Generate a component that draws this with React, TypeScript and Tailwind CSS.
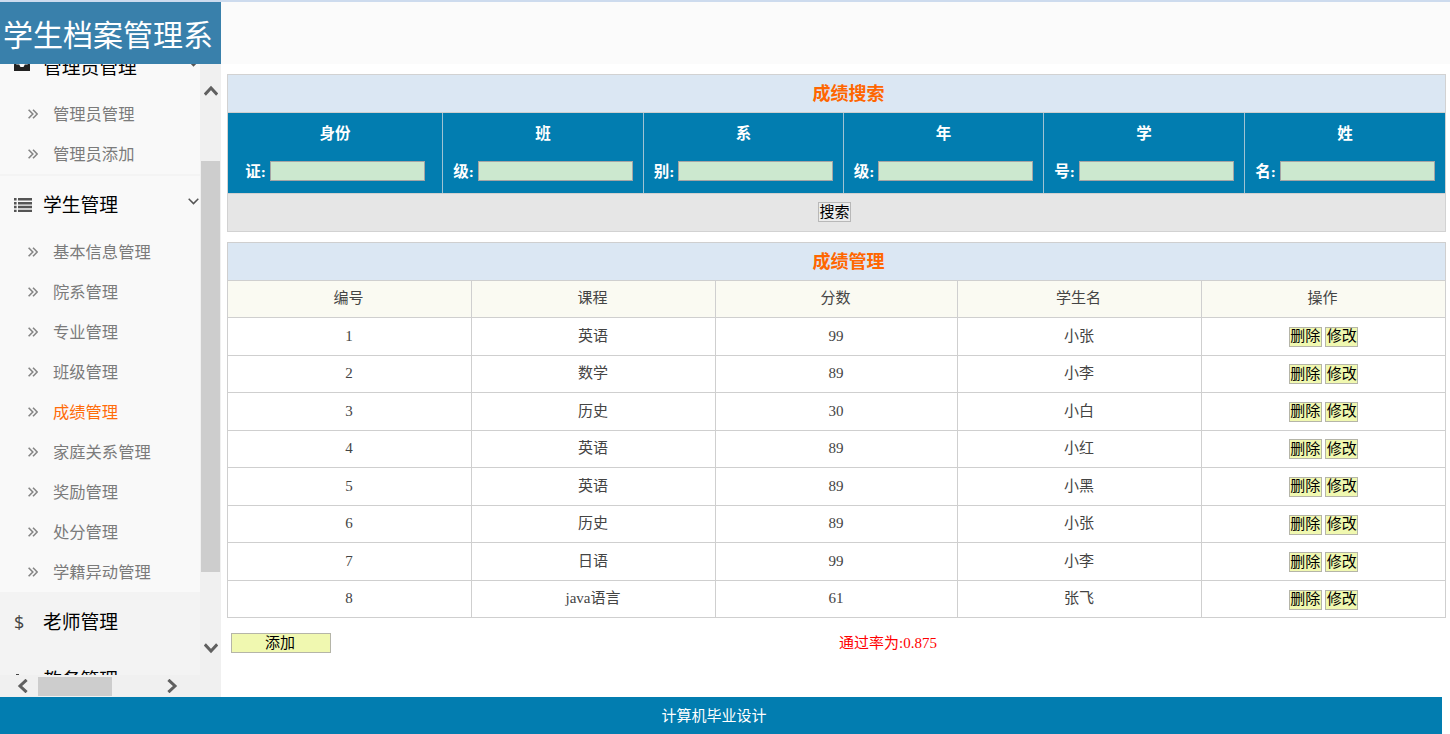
import { ReactNode } from "react";

interface MenuItem {
  title: string;
  active?: boolean;
}

interface MenuHeadingProps {
  title: string;
  icon: ReactNode;
  open?: boolean;
}

const adminItems: MenuItem[] = [{ title: "管理员管理" }, { title: "管理员添加" }];

const studentItems: MenuItem[] = [
  { title: "基本信息管理" },
  { title: "院系管理" },
  { title: "专业管理" },
  { title: "班级管理" },
  { title: "成绩管理", active: true },
  { title: "家庭关系管理" },
  { title: "奖励管理" },
  { title: "处分管理" },
  { title: "学籍异动管理" },
];

const searchFields = [
  { top: "身份", bottom: "证:" },
  { top: "班", bottom: "级:" },
  { top: "系", bottom: "别:" },
  { top: "年", bottom: "级:" },
  { top: "学", bottom: "号:" },
  { top: "姓", bottom: "名:" },
];

const columns = ["编号", "课程", "分数", "学生名", "操作"];

const scores = [
  { id: 1, course: "英语", score: 99, student: "小张" },
  { id: 2, course: "数学", score: 89, student: "小李" },
  { id: 3, course: "历史", score: 30, student: "小白" },
  { id: 4, course: "英语", score: 89, student: "小红" },
  { id: 5, course: "英语", score: 89, student: "小黑" },
  { id: 6, course: "历史", score: 89, student: "小张" },
  { id: 7, course: "日语", score: 99, student: "小李" },
  { id: 8, course: "java语言", score: 61, student: "张飞" },
];

const InboxIcon = () => (
  <svg className="-mt-[6px]" width="16" height="14" viewBox="0 0 16 14" fill="#222">
    <path fillRule="evenodd" d="M3 0h10l3 7.5V14H0V7.5L3 0zm1.3 2L2.2 7.5h3l1.3 2.6h3l1.3-2.6h3L11.7 2H4.3z" />
  </svg>
);

const ListIcon = () => (
  <svg width="18" height="14" viewBox="0 0 18 14" fill="#555">
    <path d="M0 0h2.6v2.5H0zM4 0h14v2.5H4zM0 3.9h2.6v2.5H0zM4 3.9h14v2.5H4zM0 7.8h2.6v2.5H0zM4 7.8h14v2.5H4zM0 11.7h2.6V14H0zM4 11.7h14V14H4z" />
  </svg>
);

const BarsIcon = () => (
  <svg width="16" height="16" viewBox="0 0 16 16" fill="#444">
    <path d="M2 2h3v2.5H2zM0 7h8v8H0z" />
  </svg>
);

const DoubleAngle = () => (
  <svg width="10" height="10" viewBox="0 0 10 10" fill="none" stroke="#858585" strokeWidth="1.6">
    <path d="M.6.8 4.8 5 .6 9.2M5 .8 9.2 5 5 9.2" />
  </svg>
);

const MenuHeading = ({ title, icon, open }: MenuHeadingProps) => (
  <div className="flex h-[58px] shrink-0 items-center pl-[14px] pr-px">
    <span className="flex w-[29px] items-center">{icon}</span>
    <span className="flex-1 whitespace-nowrap pt-[2px] text-[18.8px] leading-[28px] text-black">{title}</span>
    {open && (
      <svg className="-mt-2" width="11" height="7" viewBox="0 0 11 7" fill="none" stroke="#555" strokeWidth="1.5">
        <path d="M.7.8 5.5 5.6 10.3.8" />
      </svg>
    )}
  </div>
);

const MenuList = ({ items }: { items: MenuItem[] }) => (
  <ul>
    {items.map((item) => (
      <li key={item.title} className="flex h-[40px] items-center pl-[28px]">
        <span className="w-[25px] pb-px">
          <DoubleAngle />
        </span>
        <span
          className={`whitespace-nowrap pt-[2px] text-[16.3px] leading-[24px] ${item.active ? "text-[#ff6c0a]" : "text-[#7b7b7b]"}`}
        >
          {item.title}
        </span>
      </li>
    ))}
  </ul>
);

const Sidebar = () => (
  <aside className="flex h-[633px] w-[221px] shrink-0 flex-col bg-[#f0f0f0]">
    <div className="flex h-[611px]">
      <div className="w-[200px] overflow-hidden bg-[#f3f3f3]">
        <div className="-mt-[26px] h-[138px] border-b-2 border-[#f4f4f4] bg-[#f9f9f9]">
          <div className="h-[56px]">
            <MenuHeading title="管理员管理" icon={<InboxIcon />} open />
          </div>
          <MenuList items={adminItems} />
        </div>
        <div className="h-[416px] bg-[#f9f9f9]">
          <div className="h-[56px]">
            <MenuHeading title="学生管理" icon={<ListIcon />} open />
          </div>
          <MenuList items={studentItems} />
        </div>
        <div className="pt-px">
          <MenuHeading
            title="老师管理"
            icon={<span className="font-['Open_Sans',sans-serif] text-[18px] text-[#444]">$</span>}
          />
        </div>
        <MenuHeading title="教务管理" icon={<BarsIcon />} />
      </div>
      <div className="flex w-[21px] flex-col items-center">
        <svg className="mt-[21px]" width="14" height="11" viewBox="0 0 14 11" fill="none" stroke="#606060" strokeWidth="3">
          <path d="M.8 9.6 7 3 13.2 9.6" />
        </svg>
        <div className="mt-[65px] h-[411px] w-[19px] bg-[#cdcdcd]" />
        <svg className="mt-[71px]" width="14" height="11" viewBox="0 0 14 11" fill="none" stroke="#606060" strokeWidth="3">
          <path d="M.8 1.4 7 8 13.2 1.4" />
        </svg>
      </div>
    </div>
    <div className="flex h-[22px] items-center pl-[17px]">
      <svg width="11" height="14" viewBox="0 0 11 14" fill="none" stroke="#606060" strokeWidth="3">
        <path d="M9.6.8 3 7l6.6 6.2" />
      </svg>
      <div className="ml-[10px] h-[19px] w-[74px] bg-[#cdcdcd]" />
      <svg className="ml-[55px]" width="11" height="14" viewBox="0 0 11 14" fill="none" stroke="#606060" strokeWidth="3">
        <path d="M1.4.8 8 7l-6.6 6.2" />
      </svg>
    </div>
  </aside>
);

const TableTitle = ({ title }: { title: string }) => (
  <div className="flex h-[37.5px] items-center justify-center border-b border-[#cfcfcf] bg-[#dbe7f3] pl-[24px] pt-[2px] text-[18px] font-bold text-[#ff6600]">
    {title}
  </div>
);

const SearchTable = () => (
  <div className="h-[158px] w-[1219px] border border-[#d2d2d2] bg-[#e6e6e6]">
    <TableTitle title="成绩搜索" />
    <div className="grid h-[81px] grid-cols-[215px_201px_200px_200px_201px_200px] border-b border-[#d0d0d0] bg-[#027db0] font-bold text-white">
      {searchFields.map((field, i) => (
        <div
          key={field.top}
          className={`flex flex-col text-center text-[15.5px] leading-[39px] ${i < 5 ? "border-r border-[#9fc3d3]" : ""}`}
        >
          <div className="h-[39px] pt-[1px]">{field.top}</div>
          <div className="flex h-[39px] items-center justify-center gap-[4px]">
            <span className="pt-px">{field.bottom}</span>
            <input type="text" className="h-[20px] w-[155px] border border-[#a5a5a5] bg-[#cce8cf]" />
          </div>
        </div>
      ))}
    </div>
    <div className="flex h-[37px] items-center justify-center pr-[4px]">
      <button className="h-[20px] w-[33px] whitespace-nowrap border border-[#b8b8b8] bg-[#ececec] text-[15px] leading-[17px] text-black">
        搜索
      </button>
    </div>
  </div>
);

const ActionButton = ({ title }: { title: string }) => (
  <button className="h-[20px] w-[33px] whitespace-nowrap border border-[#b5b5a8] bg-[#f0f8b0] text-[15px] leading-[17px] text-black">
    {title}
  </button>
);

const ScoreTable = () => (
  <div className="mt-[10px] w-[1219px] border-l border-t border-[#cfcfcf] text-[15px] text-[#444]">
    <div className="border-r border-[#cfcfcf]">
      <TableTitle title="成绩管理" />
    </div>
    <div className="grid h-[37.5px] grid-cols-[244px_244px_242px_244px_244px] bg-[#fafaf2]">
      {columns.map((col) => (
        <div key={col} className="flex items-center justify-center border-b border-r border-[#cfcfcf] pb-px pr-[2px]">
          {col}
        </div>
      ))}
    </div>
    {scores.map((row) => (
      <div key={row.id} className="grid h-[37.55px] grid-cols-[244px_244px_242px_244px_244px]">
        {[row.id, row.course, row.score, row.student].map((cell, i) => (
          <div key={i} className="flex items-center justify-center border-b border-r border-[#cfcfcf] pb-px pr-px">
            {cell}
          </div>
        ))}
        <div className="flex items-center justify-center gap-[3.5px] border-b border-r border-[#cfcfcf] pt-[1px]">
          <ActionButton title="删除" />
          <ActionButton title="修改" />
        </div>
      </div>
    ))}
  </div>
);

const App = () => {
  return (
    <div className="h-[734px] w-[1450px] overflow-hidden bg-white font-['Liberation_Serif','Noto_Sans_CJK_SC',serif]">
      <header className="flex h-[64px] border-t-2 border-[#cddbee] bg-[#fbfbfb]">
        <h1 className="flex w-[221px] items-center overflow-hidden whitespace-nowrap bg-[#3980ab] pl-[3px] pt-[5px] text-[30px] text-white">
          学生档案管理系
        </h1>
      </header>
      <div className="flex h-[633px]">
        <Sidebar />
        <main className="flex flex-1 flex-col pl-[6px] pt-[10px]">
          <SearchTable />
          <ScoreTable />
          <div className="flex pl-[4px] pt-[15px] text-[15px]">
            <button className="h-[20px] w-[100px] border border-[#b5b5a8] bg-[#f0f8b0] pr-[2px] text-[15px] leading-[16px] text-black">
              添加
            </button>
            <span className="ml-[508px] leading-[20px] text-[#ff0000]">通过率为:0.875</span>
          </div>
        </main>
      </div>
      <footer className="flex h-[37px] w-[1442px] items-center justify-center bg-[#027db0] pr-[14px] pt-[2px] text-[15px] text-white">
        计算机毕业设计
      </footer>
    </div>
  );
};

export default App;
